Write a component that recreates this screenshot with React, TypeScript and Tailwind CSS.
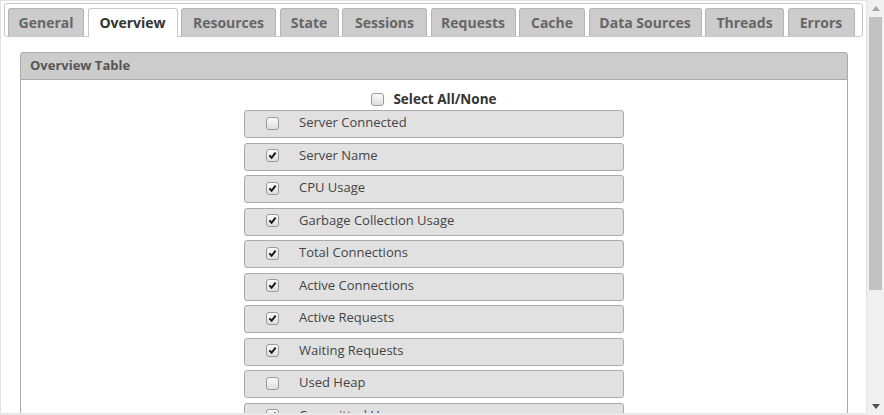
const tabs = [
  { label: "General", w: 76 },
  { label: "Overview", w: 90, active: true },
  { label: "Resources", w: 95 },
  { label: "State", w: 59 },
  { label: "Sessions", w: 85 },
  { label: "Requests", w: 85 },
  { label: "Cache", w: 66 },
  { label: "Data Sources", w: 113 },
  { label: "Threads", w: 79 },
  { label: "Errors", w: 67 },
];

const columns = [
  { name: "Server Connected", on: false },
  { name: "Server Name", on: true },
  { name: "CPU Usage", on: true },
  { name: "Garbage Collection Usage", on: true },
  { name: "Total Connections", on: true },
  { name: "Active Connections", on: true },
  { name: "Active Requests", on: true },
  { name: "Waiting Requests", on: true },
  { name: "Used Heap", on: false },
  { name: "Committed Heap", on: true },
  { name: "Max Heap", on: true },
  { name: "Uptime", on: false },
];

function Check({ on }: { on: boolean }) {
  return (
    <span className="flex h-[13px] w-[13px] shrink-0 items-center justify-center rounded-[3px] border border-[#9a9a9a] bg-gradient-to-b from-[#fafafa] to-[#dedede]">
      {on && (
        <svg width="9" height="9" viewBox="0 0 9 9">
          <path d="M1.4 4.4 L3.6 6.8 L7.6 1.6" fill="none" stroke="#1a1a1a" strokeWidth="2" />
        </svg>
      )}
    </span>
  );
}

export default function App() {
  return (
    <div className="flex h-[415px] w-[884px] overflow-hidden bg-white font-['Open_Sans',sans-serif]">
      <div className="flex h-full w-[867px] flex-col">
        <div className="flex min-h-0 flex-1 flex-col border-x border-t border-[#e2e2e2] px-[3px] pt-[2px]">
          {/* tab header */}
          <div className="relative flex h-[34px] shrink-0 items-end gap-[3.5px] rounded-[3px] border border-[#c8c8c8] pl-[3px]">
            {tabs.map((t) => (
              <div
                key={t.label}
                style={{ width: t.w }}
                className={
                  t.active
                    ? "relative -mb-px flex h-[29px] items-center justify-center rounded-t-[3px] border border-b-0 border-[#c8c8c8] bg-white pb-[2px] text-[14px] font-bold text-[#333]"
                    : "flex h-[28px] items-center justify-center rounded-t-[3px] border border-b-0 border-[#b5b5b5] bg-[#cccccc] pb-[1px] text-[14px] font-bold text-[#666]"
                }
              >
                {t.label}
              </div>
            ))}
          </div>

          {/* panel */}
          <div className="flex min-h-0 flex-1 flex-col pl-[16px] pr-[15px] pt-[15px]">
            <div className="flex h-[28px] shrink-0 items-center rounded-t-[3px] border border-[#aaa] bg-[#cccccc] pl-[9px] text-[13px] font-bold text-[#555]">
              Overview Table
            </div>
            <div className="min-h-0 flex-1 overflow-hidden border-x border-[#aaa] pt-[9px]">
              <div className="flex h-[20px] items-center justify-center gap-[9px]">
                <Check on={false} />
                <span className="text-[13.5px] font-bold text-[#333]">Select All/None</span>
              </div>
              <div className="mt-px flex flex-col items-center gap-[4.5px]">
                {columns.map((c) => (
                  <div
                    key={c.name}
                    className="flex h-[28px] w-[380px] shrink-0 items-center gap-[20px] rounded-[3px] border border-[#aaa] bg-[#e1e1e1] pb-[2px] pl-[21px] text-[13px] text-[#444]"
                  >
                    <Check on={c.on} />
                    <span>{c.name}</span>
                  </div>
                ))}
              </div>
            </div>
          </div>
        </div>
        <div className="h-[2px] shrink-0 bg-[#e8e8e8]" />
      </div>

      {/* scrollbar */}
      <div className="flex h-full w-[17px] flex-col items-center bg-[#f0f0f0]">
        <div className="flex h-[17px] w-full items-center justify-center">
          <svg width="8" height="5" viewBox="0 0 8 5">
            <path d="M0 5 L4 0 L8 5 Z" fill="#a3a3a3" />
          </svg>
        </div>
        <div className="h-[273px] w-[13px] bg-[#c1c1c1]" />
        <div className="flex-1" />
        <div className="flex h-[17px] w-full items-center justify-center">
          <svg width="8" height="5" viewBox="0 0 8 5">
            <path d="M0 0 L8 0 L4 5 Z" fill="#505050" />
          </svg>
        </div>
      </div>
    </div>
  );
}
